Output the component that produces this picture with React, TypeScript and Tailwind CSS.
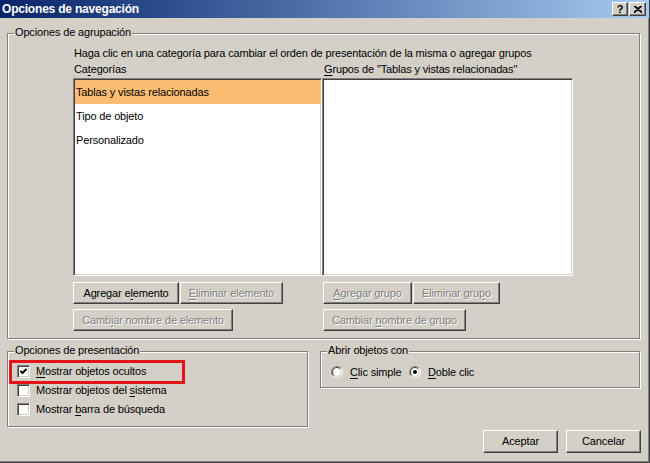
import React from 'react';

const raised =
  "bg-[#d4d0c8] border border-t-white border-l-white border-b-[#404040] border-r-[#404040] shadow-[inset_-1px_-1px_0_#808080]";
const sunken =
  "border border-t-[#808080] border-l-[#808080] border-b-white border-r-white shadow-[inset_1px_1px_0_#404040,inset_-1px_-1px_0_#d4d0c8]";
const etched =
  "relative border border-[#808080] shadow-[inset_1px_1px_0_#fff,1px_1px_0_#fff]";

// underlined access key letter
const K = ({ c }: { c: string }) => <span className="underline underline-offset-[2px]">{c}</span>;

const Button = ({ w, disabled, children, h = "h-[22px]" }: { w: string; disabled?: boolean; children: React.ReactNode; h?: string }) => (
  <div
    className={`${raised} ${w} ${h} flex items-center justify-center whitespace-nowrap ${
      disabled ? "text-[#808080] [text-shadow:1px_1px_0_#fff]" : "text-black"
    }`}
  >
    <span>{children}</span>
  </div>
);

const GroupLabel = ({ children }: { children: React.ReactNode }) => (
  <span className="absolute left-[6px] -top-[8px] px-[1px] bg-[#d4d0c8] leading-[13px]">{children}</span>
);

const Checkbox = ({ checked }: { checked?: boolean }) => (
  <div className={`${sunken} w-[13px] h-[13px] bg-white flex items-center justify-center shrink-0`}>
    {checked && (
      <svg width="9" height="9" viewBox="0 0 9 9">
        <polyline points="1.5,4 3.5,6 7.5,2" fill="none" stroke="#000" strokeWidth="2" />
      </svg>
    )}
  </div>
);

const Radio = ({ checked }: { checked?: boolean }) => (
  <svg width="12" height="12" viewBox="0 0 12 12" className="shrink-0">
    <circle cx="6" cy="6" r="4" fill="#fff" />
    <path d="M2.1 9.9 A5.5 5.5 0 0 1 9.9 2.1" fill="none" stroke="#808080" strokeWidth="1" />
    <path d="M9.9 2.1 A5.5 5.5 0 0 1 2.1 9.9" fill="none" stroke="#fff" strokeWidth="1" />
    <path d="M2.8 9.2 A4.5 4.5 0 0 1 9.2 2.8" fill="none" stroke="#404040" strokeWidth="1" />
    <path d="M9.2 2.8 A4.5 4.5 0 0 1 2.8 9.2" fill="none" stroke="#d4d0c8" strokeWidth="1" />
    {checked && <circle cx="6" cy="6" r="2" fill="#000" />}
  </svg>
);

export default function App() {
  return (
    <div className="w-[650px] h-[463px] bg-[#d4d0c8] font-['Liberation_Sans',Arial,sans-serif] text-[11px] tracking-[-0.15px] text-black flex flex-col border-r border-b border-r-[#404040] border-b-[#404040] shadow-[inset_-1px_-1px_0_#808080] overflow-hidden">
      {/* title bar */}
      <div className="h-[18px] bg-linear-to-r from-[#0a246a] to-[#a6caf0] flex items-center pl-[2px] pr-[3px]">
        <span className="text-white font-bold text-[12px] tracking-[-0.2px] leading-[18px]">Opciones de navegación</span>
        <div className="ml-auto flex gap-[1px]">
          <div className={`${raised} w-[16px] h-[14px] flex items-center justify-center font-bold text-[11px] leading-none`}>?</div>
          <div className={`${raised} w-[17px] h-[14px] flex items-center justify-center`}>
            <svg width="8" height="7" viewBox="0 0 8 7">
              <path d="M0 0 L8 7 M8 0 L0 7 M1 0 L8 6 M7 0 L0 6" stroke="#000" strokeWidth="1.2" />
            </svg>
          </div>
        </div>
      </div>

      {/* Opciones de agrupación */}
      <div className={`${etched} mt-[15px] ml-[7px] w-[633px] h-[306px] shrink-0`}>
        <GroupLabel>Opciones de agrupación</GroupLabel>
        <div className="pl-[65px] pt-[11px]">
          <div className="pl-[1px] leading-[16px]">
            Haga clic en una categoría para cambiar el orden de presentación de la misma o agregar grupos
          </div>
          <div className="flex">
            <div className="w-[249px] flex flex-col">
              <div className="pl-[1px] leading-[16px]">
                Ca<K c="t" />egorías
              </div>
              <div className={`${sunken} mt-[1px] h-[198px] bg-white pl-[1px] pt-[1px] flex flex-col`}>
                <div className="h-[24px] bg-[#fcbd72] flex items-center pl-[1px]">Tablas y vistas relacionadas</div>
                <div className="h-[24px] flex items-center pl-[1px]">Tipo de objeto</div>
                <div className="h-[24px] flex items-center pl-[1px]">Personalizado</div>
              </div>
              <div className="flex mt-[6px] gap-[1px]">
                <Button w="w-[106px]">
                  Agregar e<K c="l" />emento
                </Button>
                <Button w="w-[103px]" disabled>
                  <K c="E" />liminar elemento
                </Button>
              </div>
              <div className="flex mt-[5px]">
                <Button w="w-[160px]" disabled>
                  Camb<K c="i" />ar nombre de elemento
                </Button>
              </div>
            </div>
            <div className="w-[251px] flex flex-col">
              <div className="pl-[2px] leading-[16px]">
                <K c="G" />rupos de "Tablas y vistas relacionadas"
              </div>
              <div className={`${sunken} mt-[1px] h-[198px] bg-white`} />
              <div className="flex mt-[6px] gap-[1px] pl-[1px]">
                <Button w="w-[89px]" disabled>
                  <K c="A" />gregar grupo
                </Button>
                <Button w="w-[87px]" disabled>
                  Eliminar gru<K c="p" />o
                </Button>
              </div>
              <div className="flex mt-[5px] pl-[1px]">
                <Button w="w-[143px]" disabled>
                  Cambiar <K c="n" />ombre de grupo
                </Button>
              </div>
            </div>
          </div>
        </div>
      </div>

      {/* bottom groups */}
      <div className="flex items-start mt-[12px] ml-[7px] shrink-0">
        <div className={`${etched} w-[301px] h-[76px]`}>
          <GroupLabel>Opciones de presentación</GroupLabel>
          <div className="pl-[9px] pt-[10px] flex flex-col">
            <div className="h-[19px] flex items-center gap-[6px]">
              <Checkbox checked />
              <span>
                <K c="M" />ostrar objetos ocultos
              </span>
            </div>
            <div className="h-[19px] flex items-center gap-[6px]">
              <Checkbox />
              <span>
                Mostrar objetos del <K c="s" />istema
              </span>
            </div>
            <div className="h-[19px] flex items-center gap-[6px]">
              <Checkbox />
              <span>
                Mostrar <K c="b" />arra de búsqueda
              </span>
            </div>
          </div>
          <div className="absolute left-[1px] top-[8px] w-[176px] h-[24px] border-[3px] border-[#e3151b]" />
        </div>
        <div className={`${etched} ml-[12px] w-[320px] h-[37px]`}>
          <GroupLabel>Abrir objetos con</GroupLabel>
          <div className="pl-[10px] pt-[12px] flex items-center leading-[16px]">
            <div className="w-[78px] flex items-center gap-[7px]">
              <Radio />
              <span>
                <K c="C" />lic simple
              </span>
            </div>
            <div className="flex items-center gap-[7px]">
              <Radio checked />
              <span>
                <K c="D" />oble clic
              </span>
            </div>
          </div>
        </div>
      </div>

      {/* dialog buttons */}
      <div className="flex mt-[3px] pl-[483px] gap-[8px]">
        <Button w="w-[75px]" h="h-[23px]">Aceptar</Button>
        <Button w="w-[75px]" h="h-[23px]">Cancelar</Button>
      </div>
    </div>
  );
}
